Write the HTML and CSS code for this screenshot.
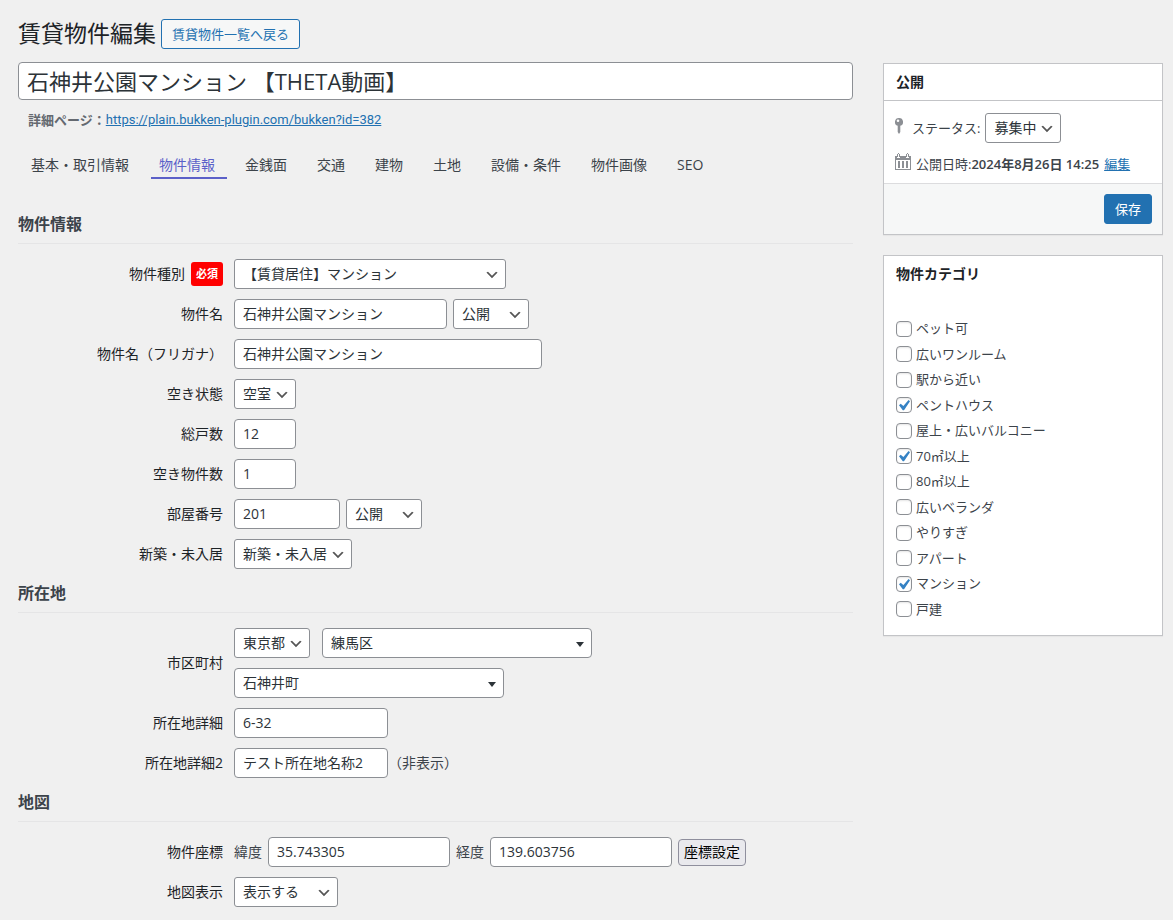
FILE: index.html
```html
<!DOCTYPE html>
<html lang="ja">
<head>
<meta charset="utf-8">
<meta name="viewport" content="width=device-width, initial-scale=1">
<title>賃貸物件編集</title>
<link rel="stylesheet" href="styles.css">
</head>
<body>
<div class="wrap">
  <header class="page-head">
    <h1 class="page-title">賃貸物件編集</h1>
    <a class="button-outline" href="#">賃貸物件一覧へ戻る</a>
  </header>
  <div class="columns">
    <main class="main">
      <input class="title-input" type="text" aria-label="タイトル" value="石神井公園マンション 【THETA動画】">
      <p class="permalink"><strong>詳細ページ：</strong><a href="#">https://plain.bukken-plugin.com/bukken?id=382</a></p>
      <nav class="tabs">
        <a class="tab" href="#">基本・取引情報</a>
        <a class="tab tab-active" href="#">物件情報</a>
        <a class="tab" href="#">金銭面</a>
        <a class="tab" href="#">交通</a>
        <a class="tab" href="#">建物</a>
        <a class="tab" href="#">土地</a>
        <a class="tab" href="#">設備・条件</a>
        <a class="tab" href="#">物件画像</a>
        <a class="tab" href="#">SEO</a>
      </nav>

      <section>
        <h2 class="section-title">物件情報</h2>
        <div class="rows">
          <div class="row">
            <label class="row-label" for="type">物件種別<span class="required">必須</span></label>
            <div class="fields"><select id="type" class="control w-type"><option>【賃貸居住】マンション</option></select></div>
          </div>
          <div class="row">
            <label class="row-label" for="name">物件名</label>
            <div class="fields">
              <input id="name" class="control w-name" type="text" value="石神井公園マンション">
              <select class="control w-public" aria-label="物件名の公開"><option>公開</option></select>
            </div>
          </div>
          <div class="row">
            <label class="row-label" for="kana">物件名（フリガナ）</label>
            <div class="fields"><input id="kana" class="control w-kana" type="text" value="石神井公園マンション"></div>
          </div>
          <div class="row">
            <label class="row-label" for="vacancy">空き状態</label>
            <div class="fields"><select id="vacancy" class="control"><option>空室</option></select></div>
          </div>
          <div class="row">
            <label class="row-label" for="units">総戸数</label>
            <div class="fields"><input id="units" class="control w-number" type="text" value="12"></div>
          </div>
          <div class="row">
            <label class="row-label" for="free">空き物件数</label>
            <div class="fields"><input id="free" class="control w-number" type="text" value="1"></div>
          </div>
          <div class="row">
            <label class="row-label" for="room">部屋番号</label>
            <div class="fields">
              <input id="room" class="control w-room" type="text" value="201">
              <select class="control w-public" aria-label="部屋番号の公開"><option>公開</option></select>
            </div>
          </div>
          <div class="row">
            <label class="row-label" for="newly">新築・未入居</label>
            <div class="fields"><select id="newly" class="control"><option>新築・未入居</option></select></div>
          </div>
        </div>
      </section>

      <section>
        <h2 class="section-title">所在地</h2>
        <div class="rows">
          <div class="row">
            <label class="row-label" for="pref">市区町村</label>
            <div class="fields-stack">
              <div class="fields fields-wide">
                <select id="pref" class="control"><option>東京都</option></select>
                <select class="control select-search" aria-label="市区"><option>練馬区</option></select>
              </div>
              <div class="fields">
                <select class="control select-search" aria-label="町村"><option>石神井町</option></select>
              </div>
            </div>
          </div>
          <div class="row">
            <label class="row-label" for="addr">所在地詳細</label>
            <div class="fields"><input id="addr" class="control w-address" type="text" value="6-32"></div>
          </div>
          <div class="row">
            <label class="row-label" for="addr2">所在地詳細2</label>
            <div class="fields"><input id="addr2" class="control w-address" type="text" value="テスト所在地名称2"><span class="note">（非表示）</span></div>
          </div>
        </div>
      </section>

      <section>
        <h2 class="section-title">地図</h2>
        <div class="rows">
          <div class="row">
            <span class="row-label">物件座標</span>
            <div class="fields">
              <label for="lat">緯度</label>
              <input id="lat" class="control w-coord" type="text" value="35.743305">
              <label for="lng">経度</label>
              <input id="lng" class="control w-coord" type="text" value="139.603756">
              <button class="button-plain" type="button">座標設定</button>
            </div>
          </div>
          <div class="row">
            <label class="row-label" for="map">地図表示</label>
            <div class="fields"><select id="map" class="control w-map"><option>表示する</option></select></div>
          </div>
        </div>
      </section>
    </main>

    <aside class="side">
      <section class="box">
        <h2 class="box-title box-title-line">公開</h2>
        <div class="publish">
          <div class="status">
            <svg class="pin" width="8" height="16" viewBox="0 0 8 16" aria-hidden="true"><path fill="#8c8f94" fill-rule="evenodd" d="M4 0a4 4 0 0 1 1.300 7.800V14L4 16l-1.300-2V7.800A4 4 0 0 1 4 0zM3 1.500a1.300 1.300 0 1 0 0 2.600a1.300 1.300 0 0 0 0-2.600z"/></svg>
            <label for="status">ステータス:</label>
            <select id="status" class="control"><option>募集中</option></select>
          </div>
          <div class="date">
            <svg width="16" height="17" viewBox="0 0 16 17" aria-hidden="true"><path fill="#8c8f94" d="M0 3h2v2h3V3h6v2h3V3h2v14H0zM3 0h1v4H3zM12 0h1v4h-1z"/><path fill="#8c8f94" d="M2 1h1v3H2zM4 1h1v3H4zM11 1h1v3h-1zM13 1h1v3h-1z"/><path fill="#fff" d="M3 1h1v3H3zM12 1h1v3h-1zM1 7h14v9H1z"/><path fill="#8c8f94" d="M3 8h2v7H3zM7 8h2v7H7zM11 8h2v7h-2z"/></svg>
            <span>公開日時:<b>2024年8月26日 14:25</b></span>
            <a href="#">編集</a>
          </div>
        </div>
        <div class="box-foot"><button class="button-primary" type="button">保存</button></div>
      </section>

      <section class="box">
        <h2 class="box-title">物件カテゴリ</h2>
        <ul class="categories">
          <li><label><input type="checkbox">ペット可</label></li>
          <li><label><input type="checkbox">広いワンルーム</label></li>
          <li><label><input type="checkbox">駅から近い</label></li>
          <li><label><input type="checkbox" checked>ペントハウス</label></li>
          <li><label><input type="checkbox">屋上・広いバルコニー</label></li>
          <li><label><input type="checkbox" checked>70㎡以上</label></li>
          <li><label><input type="checkbox">80㎡以上</label></li>
          <li><label><input type="checkbox">広いベランダ</label></li>
          <li><label><input type="checkbox">やりすぎ</label></li>
          <li><label><input type="checkbox">アパート</label></li>
          <li><label><input type="checkbox" checked>マンション</label></li>
          <li><label><input type="checkbox">戸建</label></li>
        </ul>
      </section>
    </aside>
  </div>
</div>
</body>
</html>
```
FILE: styles.css
```css
*, *::before, *::after { box-sizing: border-box; }

body {
  margin: 0;
  background: #f0f0f0;
  color: #3c434a;
  font: 13px/20px "Open Sans", "Noto Sans CJK JP", sans-serif;
}

input, select, button { font-family: inherit; }
a { color: #2271b1; }

.wrap { padding: 19px 10px 12px 18px; }

.page-head { display: flex; align-items: center; gap: 5px; margin-bottom: 13px; }
.page-title { margin: 0; color: #1d2327; font-size: 23px; font-weight: 400; line-height: 28px; padding-bottom: 2px; }

.button-outline {
  padding: 0 10px;
  border: 1px solid #2271b1;
  border-radius: 3px;
  background: #f6f7f7;
  line-height: 28px;
  text-decoration: none;
}

.columns { display: grid; grid-template-columns: minmax(0, 1fr) 280px; gap: 30px; align-items: start; }

.title-input {
  display: block;
  width: 100%;
  height: 38px;
  padding: 0 8px 2px;
  border: 1px solid #8c8f94;
  border-radius: 4px;
  background: #fff;
  color: #2c3338;
  font-size: 22px;
}

.permalink { display: flex; margin: 10px 0 0 10px; color: #646970; }
.permalink strong { font-weight: 600; }
.permalink a { font-family: Roboto, sans-serif; }

.tabs { display: flex; flex-wrap: wrap; gap: 0 10px; margin: 22px 0 21px 5px; }
.tab {
  padding: 0 12px 0 8px;
  border-bottom: 2px solid transparent;
  color: #3c434a;
  font-size: 14px;
  line-height: 25px;
  text-decoration: none;
}
.tab-active { border-color: #5b60c8; color: #5b60c8; }

.section-title {
  margin: 0;
  padding: 12px 0 7px;
  border-bottom: 1px solid #e5e5e6;
  font-size: 16px;
  font-weight: 600;
  line-height: 24px;
}

.rows { display: grid; gap: 10px; padding-top: 15px; font-size: 14px; }
.row { display: grid; grid-template-columns: 205px minmax(0, 1fr); gap: 11px; align-items: center; }
.row-label { display: flex; align-items: center; justify-content: flex-end; gap: 6px; color: #1d2327; }
.fields { display: flex; flex-wrap: wrap; align-items: center; gap: 6px; }
.fields-wide { gap: 12px; }
.fields-stack { display: grid; gap: 10px; }
.note { margin-left: -6px; }

.required {
  padding: 0 5px;
  border-radius: 3px;
  background: #f00;
  color: #fff;
  font-size: 11px;
  font-weight: 700;
  line-height: 24px;
}

.control {
  height: 30px;
  margin: 0;
  padding: 0 8px 2px;
  border: 1px solid #8c8f94;
  border-radius: 4px;
  background-color: #fff;
  color: #2c3338;
  font-size: 14px;
}
select.control {
  appearance: none;
  padding-right: 24px;
  border-radius: 3px;
  background-image: url("data:image/svg+xml,%3Csvg xmlns='http://www.w3.org/2000/svg' width='20' height='20' viewBox='0 0 20 20'%3E%3Cpath d='M5 6l5 5 5-5 2 1-7 7-7-7 2-1z' fill='%23555'/%3E%3C/svg%3E");
  background-position: right 5px top 55%;
  background-repeat: no-repeat;
  background-size: 16px 16px;
}
select.select-search {
  width: 270px;
  border-radius: 4px;
  background-image: url("data:image/svg+xml,%3Csvg xmlns='http://www.w3.org/2000/svg' width='8' height='5' viewBox='0 0 8 5'%3E%3Cpath d='M0 0h8L4 5z' fill='%232c3338'/%3E%3C/svg%3E");
  background-position: right 7px top 13px;
  background-size: 8px 5px;
}
.w-type { width: 272px; }
.w-name { width: 213px; }
.w-public { width: 76px; }
.w-kana { width: 308px; }
.w-number { width: 62px; }
.w-room { width: 106px; }
.w-address { width: 154px; }
.w-coord { width: 182px; }
.w-map { width: 104px; }

.button-plain {
  height: 27px;
  padding: 0 5px 2px;
  border: 1px solid #8f8f9d;
  border-radius: 4px;
  background: #e9e9ed;
  color: #000;
  font-size: 14px;
}

.side { display: grid; gap: 20px; padding-top: 1px; }
.box { border: 1px solid #c3c4c7; background: #fff; box-shadow: 0 1px 1px rgba(0, 0, 0, .04); }
.box-title {
  margin: 0;
  padding: 0 12px;
  color: #1d2327;
  font-size: 14px;
  font-weight: 600;
  line-height: 36px;
}
.box-title-line { border-bottom: 1px solid #c3c4c7; }

.publish { padding: 12px 10px 9px 11px; }
.status { display: flex; align-items: center; gap: 5px; }
.pin { margin: 0 4px 4px 0; }
.date { display: flex; align-items: center; gap: 5px; margin-top: 10px; }
.date svg { margin-bottom: 4px; }
.date b { font-weight: 600; }

.box-foot { display: flex; justify-content: flex-end; padding: 10px; border-top: 1px solid #dcdcde; background: #f6f7f7; }
.button-primary {
  height: 30px;
  padding: 0 10px 2px;
  border: 1px solid #2271b1;
  border-radius: 3px;
  background: #2271b1;
  color: #fff;
  font-size: 13px;
}

.categories { margin: 0; padding: 27px 12px 16px; list-style: none; line-height: 1.5; }
.categories li + li { margin-top: 6px; }
.categories label { display: flex; align-items: center; gap: 4px; }
.categories input {
  appearance: none;
  flex: none;
  width: 16px;
  height: 16px;
  margin: 0;
  border: 1px solid #8c8f94;
  border-radius: 4px;
  background: #fff center / 20px 20px no-repeat;
  box-shadow: inset 0 1px 2px rgba(0, 0, 0, .1);
}
.categories input:checked {
  background-image: url("data:image/svg+xml,%3Csvg xmlns='http://www.w3.org/2000/svg' viewBox='0 0 20 20'%3E%3Cpath d='M14.5 5l1.500 1.200-6 9H8.800L5 10.200l1.700-1.400 2.700 2.300z' fill='%233582c4'/%3E%3C/svg%3E");
}
```
